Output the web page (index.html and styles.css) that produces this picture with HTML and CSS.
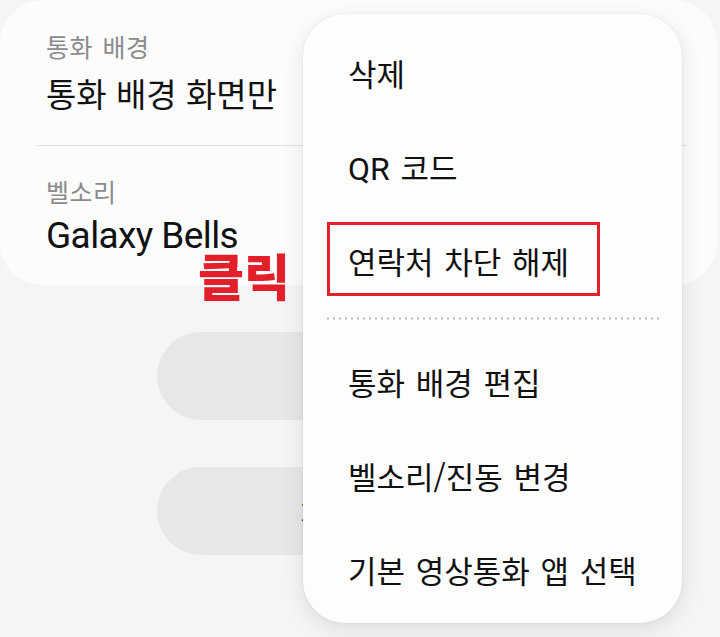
FILE: index.html
```html
<!DOCTYPE html>
<html lang="ko">
<head>
<meta charset="utf-8">
<link rel="stylesheet" href="styles.css">
</head>
<body>
<div class="screen">
  <section class="card">
    <div class="label">통화 배경</div>
    <div class="value">통화 배경 화면만</div>
    <div class="divider"></div>
    <div class="label">벨소리</div>
    <div class="value latin">Galaxy Bells</div>
  </section>

  <div class="actions">
    <div class="pill"></div>
    <div class="pill"><span class="pill-text">차단 해제</span></div>
  </div>

  <div class="annot-click">클릭</div>

  <div class="menu">
    <div class="item"><span>삭제</span></div>
    <div class="item"><span><span class="lat">QR</span> 코드</span></div>
    <div class="item"><span>연락처 차단 해제</span></div>
    <div class="dots"></div>
    <div class="item"><span>통화 배경 편집</span></div>
    <div class="item"><span>벨소리/진동 변경</span></div>
    <div class="item"><span>기본 영상통화 앱 선택</span></div>
  </div>

  <div class="annot-box"></div>
</div>
</body>
</html>
```

FILE: styles.css
```css
html, body {
  margin: 0;
  padding: 0;
  background: #f5f5f7;
}

.screen {
  position: relative;
  width: 720px;
  height: 637px;
  overflow: hidden;
  background: #f5f5f7;
  font-family: "Noto Sans CJK KR", "Noto Sans", sans-serif;
  color: #111;
}

.card {
  width: 717px;
  height: 285px;
  box-sizing: border-box;
  background: #fcfcfd;
  border-radius: 44px 44px 42px 42px;
  padding-top: 31px;
}

.label {
  font-size: 25px;
  line-height: 30px;
  height: 30px;
  color: #8b8b8d;
  padding-left: 46px;
  letter-spacing: 0.5px;
  word-spacing: 2px;
}

.value {
  font-size: 33px;
  line-height: 44px;
  height: 44px;
  margin-top: 10px;
  padding-left: 46px;
  white-space: nowrap;
}

.value.latin {
  font-family: Roboto, "Noto Sans", sans-serif;
  font-size: 37px;
  letter-spacing: -0.6px;
  margin-top: 8px;
}

.divider {
  height: 1px;
  background: #e2e2e4;
  margin: 30px 30px 30px 37px;
}

.actions {
  display: flex;
  flex-direction: column;
  gap: 47px;
  margin-top: 47px;
  padding-left: 157px;
}

.pill {
  width: 406px;
  height: 88px;
  border-radius: 44px;
  background: #e7e7e9;
  display: flex;
  align-items: center;
  justify-content: center;
}

.pill-text {
  font-size: 30px;
  color: #111;
}

.annot-click {
  position: absolute;
  left: 198px;
  top: 249px;
  font-size: 50px;
  line-height: 50px;
  font-weight: 900;
  color: #e3202a;
}

.menu {
  position: absolute;
  left: 303px;
  top: 14px;
  width: 379px;
  height: 609px;
  box-sizing: border-box;
  padding: 11px 0 7px;
  background: #fdfdfe;
  border-radius: 42px;
  box-shadow: 0 6px 22px rgba(0, 0, 0, 0.10), 0 0 3px rgba(0, 0, 0, 0.08);
}

.item {
  height: 94px;
  display: flex;
  align-items: center;
  padding-left: 45px;
  font-size: 31px;
  word-spacing: 2px;
  white-space: nowrap;
  color: #111;
}

.item .lat {
  font-family: Roboto, "Noto Sans", sans-serif;
  font-size: 32px;
}

.dots {
  height: 3px;
  margin: 10px 22px 14px 22px;
  background-image: radial-gradient(circle, #b4b4b8 0.9px, transparent 1.3px);
  background-size: 6px 3px;
  background-repeat: repeat-x;
}

.annot-box {
  position: absolute;
  left: 327px;
  top: 222px;
  width: 273px;
  height: 74px;
  box-sizing: border-box;
  border: 3.5px solid #e2212b;
}
```
